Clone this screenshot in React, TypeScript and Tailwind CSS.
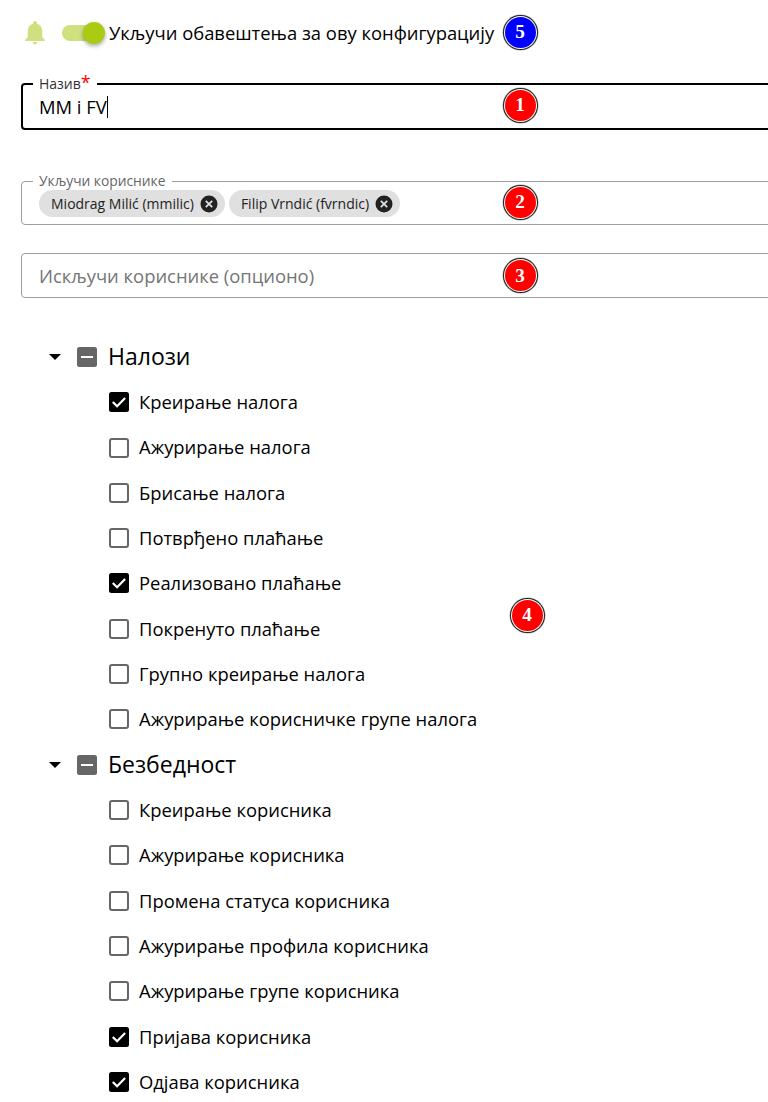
import React from "react";

const sans = "font-['Open_Sans',sans-serif]";

type Item = { label: string; checked?: boolean };

const groups: { title: string; items: Item[] }[] = [
    {
        title: "Налози",
        items: [
            { label: "Креирање налога", checked: true },
            { label: "Ажурирање налога" },
            { label: "Брисање налога" },
            { label: "Потврђено плаћање" },
            { label: "Реализовано плаћање", checked: true },
            { label: "Покренуто плаћање" },
            { label: "Групно креирање налога" },
            { label: "Ажурирање корисничке групе налога" },
        ],
    },
    {
        title: "Безбедност",
        items: [
            { label: "Креирање корисника" },
            { label: "Ажурирање корисника" },
            { label: "Промена статуса корисника" },
            { label: "Ажурирање профила корисника" },
            { label: "Ажурирање групе корисника" },
            { label: "Пријава корисника", checked: true },
            { label: "Одјава корисника", checked: true },
        ],
    },
];

function Badge({ n, pos, blue }: { n: number; pos: string; blue?: boolean }) {
    return (
        <div className={`absolute ${pos} flex h-[31px] w-[31px] items-center justify-center rounded-full shadow-[0_0_0_1px_#fff,0_0_0_2px_#222,0_0_0_2.5px_#aaa] font-['Liberation_Serif',serif] text-[19.2px] leading-none font-bold text-white ${blue ? "bg-[#0000ff]" : "bg-[#ff0000]"}`}>
            {n}
        </div>
    );
}

function CheckBox({ checked }: { checked?: boolean }) {
    if (checked) {
        return (
            <svg width="22" height="22" viewBox="0 0 22 22" className="shrink-0">
                <rect x="1" y="1" width="20" height="20" rx="2.5" fill="#000" />
                <path d="M4.800 11l4.300 4.300 8-8.200" fill="none" stroke="#fff" strokeWidth="2.200" />
            </svg>
        );
    }
    return (
        <svg width="22" height="22" viewBox="0 0 22 22" className="shrink-0">
            <rect x="2" y="2" width="18" height="18" rx="2" fill="#fff" stroke="#666" strokeWidth="2" />
        </svg>
    );
}

function Chip({ label }: { label: string }) {
    return (
        <span className="flex h-[27px] items-center rounded-full bg-[#e0e0e0] pl-[12px] pr-[7px] text-[14px] text-[#222]">
            {label}
            <svg width="18" height="18" viewBox="0 0 18 18" className="ml-[6px]">
                <circle cx="9" cy="9" r="8.500" fill="#222" />
                <path d="M5.800 5.800l6.400 6.400M12.200 5.800l-6.400 6.400" stroke="#e0e0e0" strokeWidth="1.800" />
            </svg>
        </span>
    );
}

export default function App(): React.JSX.Element {
    return (
        <div className={`relative h-[1102px] w-[768px] overflow-hidden bg-white text-black ${sans}`}>
            <div className="flex h-[66px] items-center pl-[22px]">
                <svg width="26" height="26" viewBox="0 0 24 24" fill="#cfe07f">
                    <path d="M12 22.500c1.200 0 2.200-1 2.200-2.200H9.800c0 1.200 1 2.200 2.200 2.200zM18.700 16v-5.500c0-3.400-1.800-6.200-4.900-7V2.800C13.800 1.800 13 1 12 1s-1.800.8-1.800 1.800v.7c-3.100.8-4.900 3.600-4.900 7V16L3 18.200v1.100h18v-1.100L18.700 16z" />
                </svg>
                <div className="relative ml-[14px] h-[16px] w-[38px] rounded-full bg-[#cfe07f]">
                    <div className="absolute right-[-5px] top-[-3px] h-[22px] w-[22px] rounded-full bg-[#abcb12] shadow-[0_2px_4px_rgba(0,0,0,0.35)]"></div>
                </div>
                <span className="ml-[9px] text-[18.4px] leading-none">Укључи обавештења за ову конфигурацију</span>
            </div>

            <div className="flex w-[830px] flex-col pl-[21px]">
                <fieldset className="mt-[10px] h-[54px] rounded-[4px] border-2 border-black pl-[10px] pt-0">
                    <legend className="px-[6px] text-[14px] leading-[16px] text-[#333]">
                        Назив<span className="text-[18px] leading-[10px] text-[#ff0000]">*</span>
                    </legend>
                    <div className="flex h-[30px] items-center pl-[6px] text-[18.4px]">
                        MM i FV<span className="h-[22px] w-px bg-black"></span>
                    </div>
                </fieldset>

                <fieldset className="mt-[43px] h-[52px] rounded-[4px] border border-[#9e9e9e] pl-[11px]">
                    <legend className="px-[6px] text-[13.8px] leading-[16px] text-[#666]">Укључи кориснике</legend>
                    <div className="flex gap-[4px] pl-[6px] pt-[1px]">
                        <Chip label="Miodrag Milić (mmilic)" />
                        <Chip label="Filip Vrndić (fvrndic)" />
                    </div>
                </fieldset>

                <div className="mt-[28px] flex h-[45px] items-center rounded-[4px] border border-[#9e9e9e] pl-[17px] text-[18.4px] text-[#757575]">
                    Искључи кориснике (опционо)
                </div>
            </div>

            <div className="mt-[36.2px] flex flex-col">
                {groups.map((group) => (
                    <div key={group.title} className="flex flex-col">
                        <div className="flex h-[45.33px] items-center pl-[49px]">
                            <svg width="12" height="6" viewBox="0 0 12 6" className="shrink-0">
                                <path d="M0 0h12L6 6z" fill="#000" />
                            </svg>
                            <svg width="22" height="22" viewBox="0 0 22 22" className="ml-[15px] shrink-0">
                                <rect x="1" y="1" width="20" height="20" rx="2.5" fill="#666" />
                                <rect x="5" y="10" width="12" height="2" fill="#fff" />
                            </svg>
                            <span className="ml-[10px] text-[23px] leading-none">{group.title}</span>
                        </div>
                        {group.items.map((item) => (
                            <div key={item.label} className="flex h-[45.33px] items-center pl-[108px]">
                                <CheckBox checked={item.checked} />
                                <span className="ml-[9px] text-[18.4px] leading-none">{item.label}</span>
                            </div>
                        ))}
                    </div>
                ))}
            </div>

            <Badge n={5} pos="left-[504.5px] top-[16.5px]" blue />
            <Badge n={1} pos="left-[504.5px] top-[89.5px]" />
            <Badge n={2} pos="left-[504.5px] top-[186.5px]" />
            <Badge n={3} pos="left-[504.5px] top-[260px]" />
            <Badge n={4} pos="left-[511.5px] top-[599.5px]" />
        </div>
    );
}
